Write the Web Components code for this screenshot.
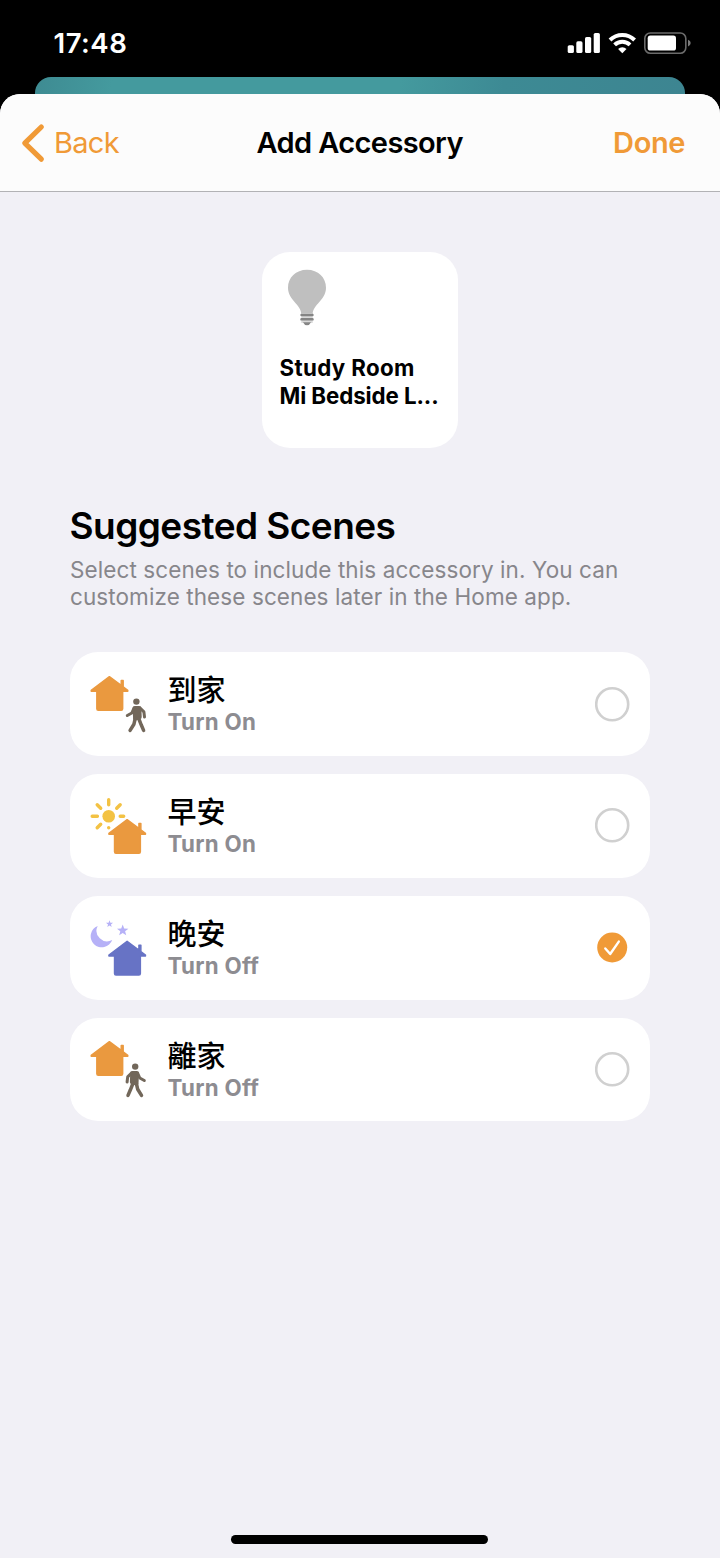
<!DOCTYPE html>
<html lang="en">
<head>
<meta charset="utf-8">
<title>Add Accessory</title>
<style>
body { margin: 0; background: #000; font-family: Inter, "Noto Sans CJK TC", sans-serif; }
</style>
</head>
<body>
<home-screen></home-screen>
<script>
function define(name, html) {
  const template = document.createElement('template');
  template.innerHTML = html;
  customElements.define(name, class extends HTMLElement {
    constructor() {
      super();
      this.attachShadow({ mode: 'open' }).append(template.content.cloneNode(true));
    }
  });
}

define('status-bar', `
<style>
:host { display: flex; justify-content: space-between; align-items: center; box-sizing: border-box; height: 76px; padding: 0 28px 0 53.500px; color: #fff; }
time { font-size: 27.5px; font-weight: 600; line-height: 34px; letter-spacing: .5px; margin-top: 10px; }
svg { display: block; margin-top: 10px; }
</style>
<time>17:48</time>
<svg width="125" height="24" viewBox="567 31 125 24">
  <g fill="#fff">
    <rect x="567.7" y="45.2" width="6.2" height="7.8" rx="1.6"/>
    <rect x="576.3" y="41.3" width="6.2" height="11.7" rx="1.6"/>
    <rect x="585" y="37" width="6.2" height="16" rx="1.6"/>
    <rect x="593.7" y="33" width="6.2" height="20" rx="1.6"/>
    <path d="M622.3 53.2l-4.2-4.2a6.2 6.2 0 0 1 8.4 0z"/>
    <rect x="647.7" y="35.6" width="28.3" height="15" rx="2.6"/>
  </g>
  <g fill="none" stroke="#fff" stroke-width="4">
    <path d="M610 40a17.6 17.6 0 0 1 24.600 0"/>
    <path d="M614.600 44.900a11.200 11.200 0 0 1 15.400 0"/>
  </g>
  <rect x="644.800" y="33" width="41" height="20.200" rx="5.500" fill="none" stroke="#6b6b6b" stroke-width="1.600"/>
  <path d="M688 39.800q2.700 1 2.700 3.300t-2.700 3.300z" fill="#7a7a7a"/>
</svg>`);

define('nav-bar', `
<style>
:host { display: grid; grid-template-columns: 1fr auto 1fr; align-items: center; box-sizing: border-box; height: 98px; padding: 0 35px 0 20px; background: #fcfcfc; border-bottom: 1px solid #b2b2b5; border-radius: 20px 20px 0 0; font-size: 29px; line-height: 36px; }
.back { display: flex; align-items: center; gap: 8px; color: #f09a37; }
.back svg { display: block; }
.back span { letter-spacing: -.7px; }
.title { font-weight: 600; letter-spacing: -.6px; transform: translateX(7.2px); }
.done { justify-self: end; color: #f09a37; font-weight: 600; letter-spacing: -.4px; }
</style>
<div class="back"><svg width="26" height="40" viewBox="20 122.500 26 40"><path d="M41.300 126.500L24.800 142.600L41.300 158.700" fill="none" stroke="#f09a37" stroke-width="5.200" stroke-linecap="round" stroke-linejoin="round"/></svg><span><slot name="back"></slot></span></div>
<div class="title"><slot name="title"></slot></div>
<div class="done"><slot name="done"></slot></div>`);

define('accessory-tile', `
<style>
:host { display: block; box-sizing: border-box; width: 196px; height: 196px; padding: 16px 0 16px 17.500px; border-radius: 28px; background: #fff; font-size: 22.300px; font-weight: 700; line-height: 27.500px; white-space: nowrap; }
svg { display: block; margin: 0 0 26px 6.500px; }
.room { letter-spacing: .36px; }
.name { letter-spacing: -.08px; }
</style>
<svg width="42" height="60" viewBox="0 0 42 60">
  <path d="M21 1.700C9.800 1.700 2 9.500 2 19.700C2 32 15.300 36.500 15.300 46H26.700C26.700 36.500 40 32 40 19.700C40 9.500 32.200 1.700 21 1.700Z" fill="#bfbfbf"/>
  <rect x="15.300" y="45" width="11.400" height="10" fill="#d9d9d9"/>
  <g fill="#858585"><rect x="14.300" y="45.700" width="13.400" height="2.600" rx="1.200"/><rect x="14.300" y="50" width="13.400" height="2.600" rx="1.200"/><path d="M17 54.200H25Q23.500 57.300 21 57.300T17 54.200Z"/></g>
</svg>
<div class="room"><slot name="room"></slot></div>
<div class="name"><slot name="name"></slot></div>`);

define('section-heading', `
<style>
:host { display: block; }
h2 { margin: 0 0 0 -.5px; font-size: 37px; line-height: 46px; font-weight: 600; letter-spacing: -.54px; }
p { margin: 7px 0 0; font-size: 22.500px; line-height: 27.300px; letter-spacing: .09px; color: #87868b; white-space: nowrap; }
</style>
<h2><slot name="title"></slot></h2>
<p><slot></slot></p>`);

const house = (x, y, fill) => `<path transform="translate(${x} ${y})" fill="${fill}" stroke="${fill}" stroke-width="1.400" stroke-linejoin="round" d="M19.400 2.600L1.200 16.300V17.300H6.800V34.800Q6.800 36.300 8.300 36.300H31.200Q32.700 36.300 32.700 34.800V17.300H37.800V16.300L33.200 12.800V6.400H31.200V11.400Z"/>`;
const walker = flip => `<g ${flip ? 'transform="translate(91.600 0) scale(-1 1)"' : ''} fill="none" stroke="#72675a" stroke-linecap="round" stroke-linejoin="round">
  <circle cx="46.400" cy="27.600" r="3.200" fill="#72675a" stroke="none"/>
  <path d="M44.800 34.200H49.200L49.500 43L45.300 44.300Z" stroke-width="4.400" fill="#72675a"/>
  <path d="M44 34L41.800 39L37.300 41.500M50.300 34.200L53.900 37.900L54.500 43" stroke-width="3"/>
  <path d="M45.200 44.500L43.900 50.300L40.100 56.400M48.700 44.500L51.200 50.800L53.600 56.400" stroke-width="3.500"/>
</g>`;
const star = (cx, cy, r) => {
  const points = Array.from({ length: 10 }, (_, i) => {
    const a = -Math.PI / 2 + i * Math.PI / 5, q = i % 2 ? r * .42 : r;
    return (cx + q * Math.cos(a)).toFixed(2) + ',' + (cy + q * Math.sin(a)).toFixed(2);
  });
  return `<polygon points="${points.join(' ')}" fill="#b6b1f7"/>`;
};
const icons = {
  arrive: house(0, 0, '#ea993f') + walker(false),
  morning: `<circle cx="18.700" cy="20.300" r="6.300" fill="#f3c244"/>
    <path d="M18.700 3.700V8.700M7.200 8.800L10.700 12.300M30.200 8.800L26.700 12.300M2.200 20.300H7.400M30.200 20.300H33.700M7.200 31.800L10.700 28.300M18.700 31.600V31.700" fill="none" stroke="#f3c244" stroke-width="3.400" stroke-linecap="round"/>` + house(17.7, 21, '#ea993f'),
  night: `<path d="M7.700 7.900A11.100 11.100 0 1 0 22.200 22A10.600 10.600 0 0 1 7.700 7.900Z" fill="#b6b1f7"/>` + star(19.500, 5.900, 3.700) + star(32.700, 12.500, 6) + house(17.7, 20.7, '#6773c5'),
  leave: house(0, 0, '#ea993f') + walker(true)
};

customElements.define('scene-icon', class extends HTMLElement {
  constructor() {
    super();
    this.attachShadow({ mode: 'open' });
  }
  connectedCallback() {
    this.shadowRoot.innerHTML = `<style>:host { display: block; } svg { display: block; }</style>
      <svg width="60" height="60" viewBox="0 0 60 60">${icons[this.getAttribute('name')]}</svg>`;
  }
});

define('select-mark', `
<style>
:host { display: block; width: 35px; height: 35px; }
svg { display: block; }
.on { display: none; }
:host([checked]) .on { display: inline; }
:host([checked]) .off { display: none; }
</style>
<svg width="35" height="35" viewBox="0 0 35 35">
  <circle class="off" cx="17.200" cy="17.300" r="16" fill="none" stroke="#d0d0d0" stroke-width="2.600"/>
  <g class="on" transform="translate(-.3 0)"><circle cx="17.500" cy="17.500" r="15" fill="#f09a37"/><path d="M10.600 18.500L15.500 24L24.100 11.600" fill="none" stroke="#fff" stroke-width="2.400" stroke-linecap="round" stroke-linejoin="round"/></g>
</svg>`);

customElements.define('scene-card', class extends HTMLElement {
  constructor() {
    super();
    this.attachShadow({ mode: 'open' });
  }
  connectedCallback() {
    this.shadowRoot.innerHTML = `<style>
:host { display: flex; align-items: center; box-sizing: border-box; height: 103.650px; padding: 0 20px; border-radius: 28px; background: #fff; }
.text { flex: 1; margin: 2.400px 0 0 17.500px; }
.name { font-size: 29px; line-height: 34px; font-weight: 500; }
.action { font-size: 22.300px; line-height: 28px; font-weight: 700; color: #8d8c91; letter-spacing: .28px; }
</style>
<scene-icon name="${this.getAttribute('icon')}"></scene-icon>
<div class="text"><div class="name"><slot name="name"></slot></div><div class="action"><slot></slot></div></div>
<select-mark ${this.hasAttribute('checked') ? 'checked' : ''}></select-mark>`;
  }
});

define('home-screen', `
<style>
:host { display: flex; flex-direction: column; width: 720px; height: 1558px; overflow: hidden; background: #000; color: #000; }
.behind { flex: none; height: 17.500px; margin: .5px 35px 0; border-radius: 16px 16px 0 0; background: linear-gradient(100deg, #3e8b92, #449a9e 12%, #449a9e 56%, #3d8a94 72%, #3d8591); }
status-bar { flex: none; }
main { flex: 1; display: flex; flex-direction: column; background: #f1f0f6; border-radius: 20px 20px 0 0; }
accessory-tile { align-self: center; margin-top: 60px; }
section-heading { margin: 55px 70px 0; }
.list { display: flex; flex-direction: column; gap: 18.100px; margin: 41.800px 70px 0; }
.indicator { width: 257px; height: 9px; margin: auto 231.400px 14px; border-radius: 5px; background: #000; }
</style>
<status-bar></status-bar>
<div class="behind"></div>
<main>
  <nav-bar><span slot="back">Back</span><span slot="title">Add Accessory</span><span slot="done">Done</span></nav-bar>
  <accessory-tile><span slot="room">Study Room</span><span slot="name">Mi Bedside L...</span></accessory-tile>
  <section-heading><span slot="title">Suggested Scenes</span>Select scenes to include this accessory in. You can<br>customize these scenes later in the Home app.</section-heading>
  <div class="list">
    <scene-card icon="arrive"><span slot="name" lang="zh-Hant">到家</span>Turn On</scene-card>
    <scene-card icon="morning"><span slot="name" lang="zh-Hant">早安</span>Turn On</scene-card>
    <scene-card icon="night" checked><span slot="name" lang="zh-Hant">晚安</span>Turn Off</scene-card>
    <scene-card icon="leave"><span slot="name" lang="zh-Hant">離家</span>Turn Off</scene-card>
  </div>
  <div class="indicator"></div>
</main>`);
</script>
</body>
</html>
